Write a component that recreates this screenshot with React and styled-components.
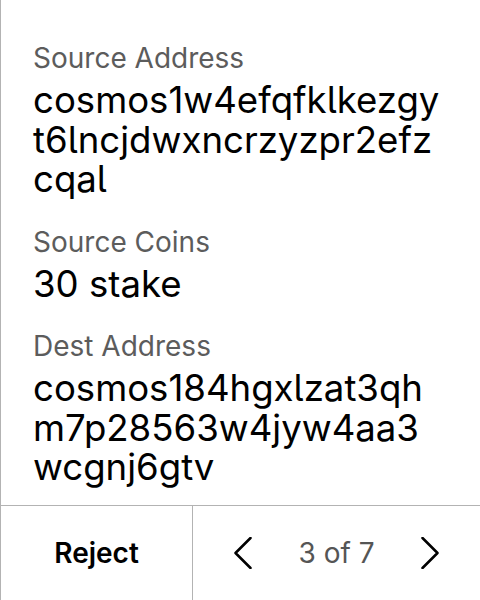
import React from "react";
import styled, { createGlobalStyle } from "styled-components";

const Global = createGlobalStyle`
  html, body {
    margin: 0;
    padding: 0;
    background: #fff;
  }
  body {
    font-family: Inter, "Noto Sans", sans-serif;
    font-feature-settings: "cv05" 1;
  }
`;

const Screen = styled.div`
  width: 480px;
  height: 600px;
  box-sizing: border-box;
  border-left: 1px solid #b3b3b3;
  display: flex;
  flex-direction: column;
  overflow: hidden;
`;

const Details = styled.div`
  flex: 1;
  padding: 41px 38px 0 32px;
  display: flex;
  flex-direction: column;
  gap: 25px;
  overflow: hidden;
`;

const Field = styled.div`
  display: flex;
  flex-direction: column;
  gap: 6px;
`;

const Label = styled.div`
  font-size: 28px;
  line-height: 34px;
  color: #5c5c5c;
`;

const Value = styled.div`
  font-size: 36.6px;
  line-height: 39.5px;
  color: #000;
  word-break: break-all;
`;

const Footer = styled.div`
  height: 95px;
  box-sizing: border-box;
  border-top: 1px solid #b3b3b3;
  display: flex;
`;

const RejectButton = styled.button`
  width: 192px;
  border: none;
  border-right: 1px solid #b3b3b3;
  background: none;
  font-family: inherit;
  font-size: 28px;
  font-weight: 600;
  color: #000;
  padding: 0;
`;

const Pager = styled.div`
  flex: 1;
  display: flex;
  align-items: center;
  justify-content: space-between;
  padding: 0 26px;
`;

const NavButton = styled.button`
  width: 48px;
  height: 48px;
  border: none;
  background: none;
  padding: 0;
  display: flex;
  align-items: center;
  justify-content: center;
`;

const Count = styled.span`
  font-size: 28px;
  color: #555;
`;

const Chevron = ({ dir }) => (
  <svg width="18" height="32" viewBox="0 0 18 32" fill="none">
    <polyline
      points={dir === "left" ? "16.5,1 1.5,16 16.5,31" : "1.5,1 16.5,16 1.5,31"}
      stroke="#000"
      strokeWidth="2.5"
      strokeLinecap="round"
      strokeLinejoin="round"
    />
  </svg>
);

const fields = [
  { label: "Source Address", value: "cosmos1w4efqfklkezgyt6lncjdwxncrzyzpr2efzcqal" },
  { label: "Source Coins", value: "30 stake" },
  { label: "Dest Address", value: "cosmos184hgxlzat3qhm7p28563w4jyw4aa3wcgnj6gtv" },
];

export default function App() {
  return (
    <Screen>
      <Global />
      <Details>
        {fields.map((f) => (
          <Field key={f.label}>
            <Label>{f.label}</Label>
            <Value>{f.value}</Value>
          </Field>
        ))}
      </Details>
      <Footer>
        <RejectButton>Reject</RejectButton>
        <Pager>
          <NavButton>
            <Chevron dir="left" />
          </NavButton>
          <Count>3 of 7</Count>
          <NavButton>
            <Chevron dir="right" />
          </NavButton>
        </Pager>
      </Footer>
    </Screen>
  );
}
